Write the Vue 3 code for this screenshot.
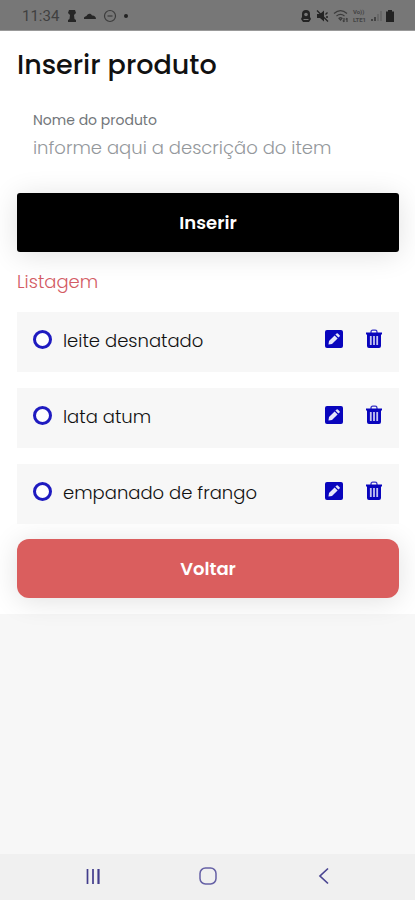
<script setup>
import { ref } from 'vue'

const name = ref('')
const items = ref([
  { id: 1, text: 'leite desnatado', done: false },
  { id: 2, text: 'lata atum', done: false },
  { id: 3, text: 'empanado de frango', done: false },
])
let nextId = 4

function add() {
  const text = name.value.trim()
  if (!text) return
  items.value.push({ id: nextId++, text, done: false })
  name.value = ''
}

function edit(item) {
  name.value = item.text
  remove(item)
}

function remove(item) {
  items.value = items.value.filter((i) => i.id !== item.id)
}
</script>

<template>
  <div class="screen">
    <header class="status">
      <div class="status-group">
        <span class="time">11:34</span>
        <svg width="10" height="14" viewBox="0 0 10 14" fill="#262626">
          <path d="M2 1h6l1 3-2 2 .5 4L9 11v2H1v-2l1.500-1L3 6 1 4z" />
        </svg>
        <svg width="14" height="14" viewBox="0 0 14 14" fill="#262626">
          <path d="M1 10V8.500C1.500 7.500 3 7.300 3.500 7 4 4.500 8 3.500 9 6.500c2-.3 4 1 4 3.500z" />
        </svg>
        <svg width="14" height="14" viewBox="0 0 14 14" fill="none" stroke="#3c3c3c" stroke-width="1.200">
          <circle cx="7" cy="7" r="5.500" />
          <path d="M4.500 7h5" />
        </svg>
        <svg width="6" height="14" viewBox="0 0 6 14"><circle cx="3" cy="7" r="2" fill="#222" /></svg>
      </div>
      <div class="status-group right">
        <svg width="12" height="14" viewBox="0 0 12 14">
          <path d="M2 5a4 4 0 0 1 8 0v3l1 2-2 3H3l-2-3 1-2z" fill="#242424" />
          <circle cx="6" cy="5.500" r="1.800" fill="#777" />
          <path d="M3.500 10.500h5" stroke="#777" />
        </svg>
        <svg width="13" height="14" viewBox="0 0 13 14">
          <path d="M1 5h3l4-3.500v11L4 9H1z" fill="#242424" />
          <path d="M1 1.500l11 11M9.500 5.500l2-2M10 8h2" stroke="#242424" stroke-width="1.300" />
        </svg>
        <svg width="16" height="14" viewBox="0 0 16 14" fill="none" stroke="#3c3c3c" stroke-width="1.200">
          <path d="M1 4.500c4-3.500 9-3.500 13 0M3.500 7c2.500-2 5.500-2 8 0M6 9.300c1-.8 2-.8 3 0l-1.500 1.700z" />
          <path d="M11 9v4M9.800 11.500L11 13M14 13V9M12.800 10.500L14 9" />
        </svg>
        <span class="lte"><span>Vo))</span><span>LTE1</span></span>
        <svg width="12" height="14" viewBox="0 0 12 14">
          <path d="M1 10h2v2H1zM4 8h2v4H4z" fill="#444" />
          <path d="M7 5h2v7H7zM10 2h2v10h-2z" fill="#686868" />
        </svg>
        <svg width="8" height="14" viewBox="0 0 8 14" fill="#222">
          <path d="M2 1h4v1.500h2V13H0V2.500h2z" />
        </svg>
      </div>
    </header>

    <main class="content">
      <h1>Inserir produto</h1>
      <form @submit.prevent="add">
        <div class="field">
          <label for="produto">Nome do produto</label>
          <input id="produto" v-model="name" type="text" placeholder="informe aqui a descrição do item" />
        </div>
        <button class="btn insert" type="submit">Inserir</button>
      </form>

      <h2>Listagem</h2>
      <ul>
        <li v-for="item in items" :key="item.id">
          <input :id="'item-' + item.id" v-model="item.done" type="checkbox" />
          <label :for="'item-' + item.id">{{ item.text }}</label>
          <button class="icon" type="button" aria-label="Editar" @click="edit(item)">
            <svg width="18" height="18" viewBox="0 0 18 18">
              <rect width="18" height="18" rx="2" fill="#0905bd" />
              <path d="M3.500 14.500l.5-3.500 5.600-5.600 3 3L7 14z" fill="#e6e6fa" />
              <path d="M10.400 4.600l1.200-1.200q.6-.5 1.200 0l1.800 1.800q.5.6 0 1.200l-1.200 1.200z" fill="#e6e6fa" />
            </svg>
          </button>
          <button class="icon" type="button" aria-label="Excluir" @click="remove(item)">
            <svg width="18" height="20" viewBox="0 0 18 20">
              <path d="M6 4V3q0-1.800 1.800-1.800h2.400Q12 1.200 12 3v1" fill="none" stroke="#3431c6" stroke-width="1.300" />
              <path d="M1 3.500h16v2h-1V17q0 2-2 2H4q-2 0-2-2V5.500H1z" fill="#0905bd" />
              <path d="M5.800 7v9M9 7v9M12.200 7v9" stroke="#c5c4f0" stroke-width="1.800" />
            </svg>
          </button>
        </li>
      </ul>
      <button class="btn back" type="button">Voltar</button>
    </main>

    <nav class="navbar" aria-label="Sistema">
      <button type="button" aria-label="Recentes">
        <svg width="20" height="20" viewBox="0 0 20 20" fill="none" stroke="#423d8c" stroke-width="1.700">
          <path d="M4.500 3v15M10 3v15" /><path d="M15.500 3v15" stroke-width="2.200" />
        </svg>
      </button>
      <button type="button" aria-label="Início">
        <svg width="20" height="20" viewBox="0 0 20 20" fill="none" stroke="#6560a5" stroke-width="1.500">
          <rect x="2" y="2" width="16" height="16" rx="5.500" />
        </svg>
      </button>
      <button type="button" aria-label="Voltar">
        <svg width="20" height="20" viewBox="0 0 20 20" fill="none" stroke="#4a4592" stroke-width="1.700">
          <path d="M15 2.500L7 10l8 7.500" />
        </svg>
      </button>
    </nav>
  </div>
</template>

<style>
body {
  margin: 0;
  background: #f7f7f7;
}
</style>

<style scoped>
* {
  box-sizing: border-box;
}
.screen {
  min-height: 100vh;
  display: flex;
  flex-direction: column;
  font-family: Poppins, Inter, sans-serif;
  color: #111;
}
button,
input {
  font: inherit;
  border: 0;
}
.status {
  height: 31px;
  padding: 2px 21px 0 22px;
  display: flex;
  align-items: center;
  justify-content: space-between;
  background: #777;
  border-bottom: 1px solid #999;
}
.status-group {
  display: flex;
  align-items: center;
  gap: 6px;
}
.right {
  gap: 4px;
}
.time {
  margin-right: 2px;
  font: 15px Roboto, sans-serif;
  color: #404040;
}
.lte {
  display: flex;
  flex-direction: column;
  font: bold 6px/8px Roboto, sans-serif;
  color: #444;
}
.content {
  padding: 16px 16px 16px 17px;
  background: #fff;
}
h1 {
  margin: 0;
  font-size: 27px;
  line-height: 36px;
  font-weight: 500;
}
.field {
  display: flex;
  flex-direction: column;
  padding: 27px 16px 29px;
}
.field label {
  font-size: 14px;
  line-height: 20px;
  color: #72767a;
}
.field input {
  width: 100%;
  height: 34px;
  padding: 0;
  margin: 0;
  background: transparent;
  outline: 0;
  font-size: 18px;
  font-weight: 300;
  color: #222;
}
.field input::placeholder {
  color: #94989c;
  opacity: 1;
}
.btn {
  display: block;
  width: 100%;
  height: 59px;
  color: #fff;
  font-size: 18px;
  font-weight: 600;
  box-shadow: 0 3px 28px rgba(0, 0, 0, 0.12);
}
.insert {
  background: #000;
  border-radius: 3px;
}
.back {
  background: #da5e5e;
  border-radius: 12px;
}
h2 {
  margin: 16px 0;
  font-size: 18px;
  line-height: 28px;
  font-weight: 300;
  color: #d35b64;
}
ul {
  list-style: none;
  margin: 0 0 15px;
  padding: 0;
  display: grid;
  gap: 16px;
}
li {
  height: 60px;
  padding: 0 16px 6px;
  display: flex;
  align-items: center;
  background: #f7f7f7;
}
li input {
  appearance: none;
  width: 19px;
  height: 19px;
  margin: 0 11px 0 0;
  border: 3px solid #1f1bc0;
  border-radius: 50%;
  background: #fff;
}
li input:checked {
  background: #1510bb;
}
li label {
  flex: 1;
  padding-top: 4px;
  font-size: 18px;
  line-height: 28px;
  font-weight: 300;
}
.icon {
  display: flex;
  padding: 0;
  margin-left: 22px;
  background: none;
}
.navbar {
  margin-top: auto;
  height: 46px;
  padding: 0 35px 2px;
  display: grid;
  grid-template-columns: repeat(3, 1fr);
  background: #f0f0f0;
}
.navbar button {
  display: flex;
  align-items: center;
  justify-content: center;
  padding: 0;
  background: none;
}
</style>
